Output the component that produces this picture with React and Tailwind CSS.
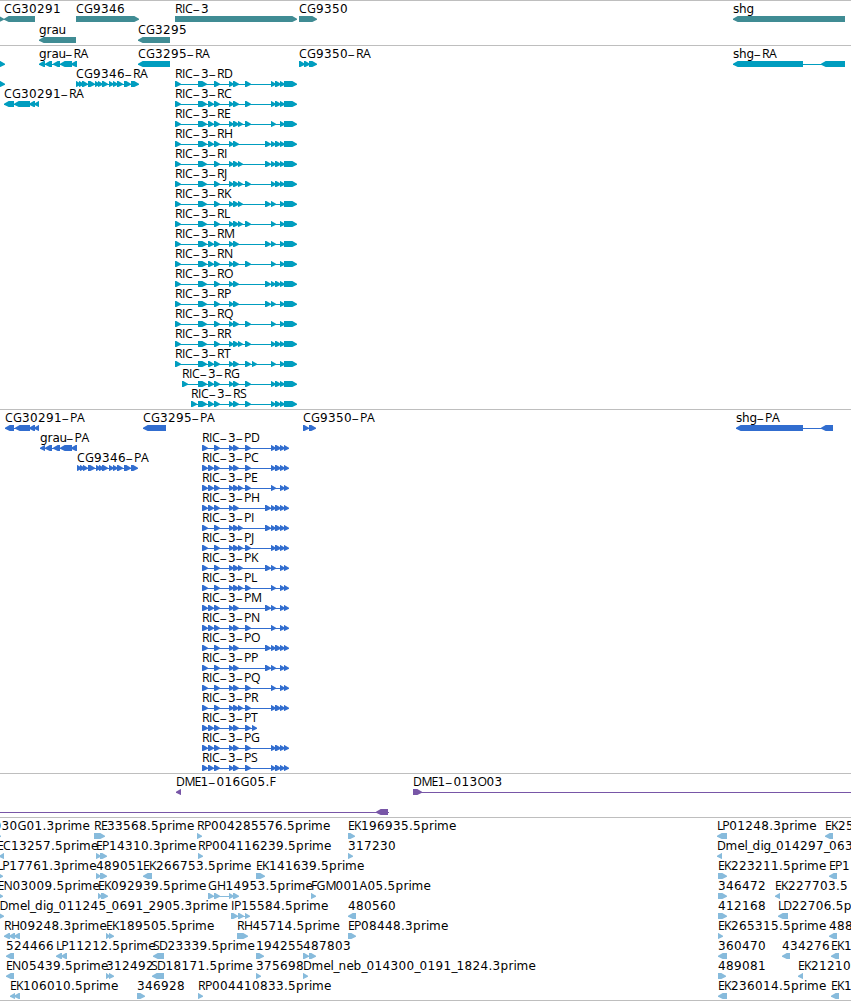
import React from 'react';

// Advance widths, in pixels, of the label characters.
const ADVANCES = {
  A: 8, C: 8, D: 8.5, E: 6, F: 5.5, G: 9, H: 8.5, I: 3, J: 3.5, K: 7, L: 5.3, M: 10, N: 9, O: 9,
  P: 7, Q: 9, R: 7, S: 6, T: 7, a: 7, b: 8, d: 8, e: 7, g: 7.5, h: 7.5, i: 3, l: 3, m: 12,
  n: 8, p: 8, r: 5, s: 6, u: 7, '-': 8, '.': 4, _: 5,
};

function charPositions(text, x) {
  let at = x;
  return [...text].map((c) => {
    const here = at;
    at += ADVANCES[c] ?? 8;
    return here;
  });
}

// One exon: a block that tapers to a tip in the direction of its strand.
function exonPoints(s, e, dir) {
  const t = Math.min(5, e - s);
  return dir > 0
    ? `${s},13 ${e - t + 0.3},13 ${e},15.7 ${e},16.7 ${e - t + 0.3},19 ${s},19`
    : `${e},13 ${s + t - 0.3},13 ${s},15.7 ${s},16.7 ${s + t - 0.3},19 ${e},19`;
}

// f(label, x, direction, exons, [line start, line end])
const f = (label, x, dir, exons, line) => ({ label, x, dir, exons, line });

// Capitals are set in the narrower Open Sans, hyphens large and thin.
function Label({ text, x }) {
  const xs = charPositions(text, x);
  let at = 0;
  return (
    <text y="10" className="fill-black">
      {text
        .split(/(-|[A-Z]+)/)
        .filter(Boolean)
        .map((part) => {
          const start = at;
          at += part.length;
          if (part === '-') {
            return (
              <tspan key={start} x={xs[start] - 0.7} y="12.5" className="text-[22px] font-extralight">
                {part}
              </tspan>
            );
          }
          return (
            <tspan
              key={start}
              x={xs.slice(start, at).join(' ')}
              y="10"
              className={/[A-Z]/.test(part) ? "font-['Open_Sans',sans-serif] text-[12.3px]" : ''}
            >
              {part}
            </tspan>
          );
        })}
    </text>
  );
}

function Feature({ label, x, dir, exons, line }) {
  const from = line ? line[0] : exons[0][0];
  const to = line ? line[1] : exons[exons.length - 1][1];
  return (
    <g>
      <rect x={from} y="16" width={to - from - (line ? 0 : 1)} height="1" shapeRendering="crispEdges" />
      {exons.map(([s, e], i) => (
        <polygon key={i} points={exonPoints(s, e, dir)} />
      ))}
      {label && <Label text={label} x={x} />}
    </g>
  );
}

function Track({ rows, color, rowHeight = 'h-5', pad = 'pb-px' }) {
  return (
    <section className={`border-t border-[#bebebe] pt-0.5 ${pad} ${color}`}>
      {rows.map((row, i) => (
        <svg
          key={i}
          className={`block w-full overflow-visible fill-current font-['DejaVu_Sans',sans-serif] text-[12px] ${rowHeight}`}
        >
          {row.map((feature, j) => (
            <Feature key={j} {...feature} />
          ))}
        </svg>
      ))}
    </section>
  );
}

const SMALL = {
  198: 206, 202: 208, 208: 214, 214: 220, 229: 234, 233: 239, 238: 243,
  245: 251, 252: 257, 265: 271, 271: 276, 275: 281, 280: 285,
};
const toExons = (starts) => starts.map((s) => [s, SMALL[s]]);

const ISOFORMS = [
  ['D', [214, 229, 233, 245, 271, 275, 280]],
  ['C', [208, 214, 229, 233, 245, 271, 275, 280]],
  ['E', [208, 214, 229, 233, 238, 245, 271, 280]],
  ['H', [208, 214, 229, 233, 265, 271, 275, 280]],
  ['I', [214, 229, 233, 238, 265, 271, 275, 280]],
  ['J', [214, 229, 233, 238, 245, 271, 275, 280]],
  ['K', [214, 229, 233, 238, 265, 271, 280]],
  ['L', [214, 229, 233, 238, 245, 271, 280]],
  ['M', [208, 214, 229, 233, 265, 271, 280]],
  ['N', [208, 214, 229, 233, 245, 271, 280]],
  ['O', [214, 229, 233, 265, 271, 275, 280]],
  ['P', [214, 229, 233, 265, 271, 280]],
  ['Q', [214, 229, 233, 245, 271, 280]],
  ['R', [214, 229, 233, 238, 245, 271, 275, 280]],
  ['T', [208, 214, 229, 233, 245, 252, 271, 280]],
  ['G', [208, 214, 229, 233, 245, 271, 275, 280], 182],
  ['S', [208, 214, 229, 233, 245, 271, 275, 280], 191],
];

const ricTranscripts = ISOFORMS.map(([id, starts, first = 175]) =>
  f(`RIC-3-R${id}`, first, 1, [[first, first + 6], [198, 207], ...toExons(starts), [284, 297]]),
);

const ricProteins = ISOFORMS.map(([id, starts]) =>
  id === 'T'
    ? f('RIC-3-PT', 202, 1, toExons([202, 208, 214, 229, 233, 245, 252]))
    : f(`RIC-3-P${id}`, 202, 1, [[202, 208], ...toExons(starts), [284, 289]]),
);

const genes = [
  [
    f('', 0, 1, [[-4, 4]]),
    f('CG30291', 4, -1, [[4, 35]]),
    f('CG9346', 76, 1, [[76, 139]]),
    f('RIC-3', 175, 1, [[175, 297]]),
    f('CG9350', 299, 1, [[299, 317]]),
    f('shg', 733, -1, [[733, 845]]),
  ],
  [f('grau', 39, -1, [[39, 76]]), f('CG3295', 138, -1, [[138, 170]])],
];

const transcripts = [
  [
    f('', 0, 1, [[-1, 5]]),
    f('grau-RA', 39, -1, [[39, 45], [45, 52], [53, 60], [60, 72], [71, 77]]),
    f('CG3295-RA', 138, -1, [[138, 170]]),
    f('CG9350-RA', 299, 1, [[299, 305], [304, 310], [309, 317]]),
    f('shg-RA', 733, -1, [[733, 803], [821, 845]]),
  ],
  [
    f('', 0, 1, [[-1, 5]]),
    f('CG9346-RA', 76, 1, [
      [76, 81], [79, 84], [82, 88], [88, 95], [95, 100], [98, 103],
      [102, 108], [109, 114], [113, 118], [117, 123], [124, 131], [131, 139],
    ]),
    ricTranscripts[0],
  ],
  [f('CG30291-RA', 4, -1, [[4, 14], [14, 30], [29, 35], [34, 39]]), ricTranscripts[1]],
  ...ricTranscripts.slice(2).map((t) => [t]),
];

const proteins = [
  [
    f('CG30291-PA', 5, -1, [[5, 14], [15, 30], [29, 35], [34, 39]]),
    f('CG3295-PA', 143, -1, [[143, 166]]),
    f('CG9350-PA', 303, 1, [[303, 309], [309, 316]]),
    f('shg-PA', 736, -1, [[736, 803], [821, 833]]),
  ],
  [f('grau-PA', 40, -1, [[40, 45], [45, 52], [53, 60], [60, 72], [71, 77]]), ricProteins[0]],
  [
    f('CG9346-PA', 77, 1, [
      [77, 82], [80, 85], [83, 88], [88, 95], [96, 101], [99, 104],
      [102, 108], [109, 114], [113, 118], [117, 123], [124, 131], [131, 138],
    ]),
    ricProteins[1],
  ],
  ...ricProteins.slice(2).map((t) => [t]),
];

const clones = [
  [f('DME1-016G05.F', 176, -1, [[176, 181]]), f('DME1-013O03', 413, 1, [[413, 422]], [413, 851])],
  [f('', 0, -1, [[376, 388]], [0, 389])],
];

const ests = [
  [
    f('030G01.3prime', -6.5, 1, [[-4, 1]]),
    f('RE33568.5prime', 94, 1, [[94, 105]]),
    f('RP004285576.5prime', 197, 1, [[197, 202]]),
    f('EK196935.5prime', 348, 1, [[348, 355]]),
    f('LP01248.3prime', 717, -1, [[717, 727]]),
    f('EK25', 825, -1, [[825, 833]]),
  ],
  [
    f('EC13257.5prime', -3, -1, [[-1, 4]]),
    f('EP14310.3prime', 96, 1, [[96, 101], [100, 107]]),
    f('RP004116239.5prime', 198, 1, [[198, 203]]),
    f('317230', 348, 1, [[348, 353]]),
    f('Dmel_dig_014297_063', 717, -1, [[717, 722]]),
  ],
  [
    f('LP17761.3prime', -3, 1, [[-2, 3]]),
    f('489051', 96, 1, [[96, 101], [100, 107]]),
    f('EK266753.5prime', 143, -1, [[143, 152]]),
    f('EK141639.5prime', 256, 1, [[256, 265]]),
    f('EK223211.5prime', 718, 1, [[718, 727]]),
    f('EP1', 829, -1, [[829, 837]]),
  ],
  [
    f('EN03009.5prime', -2.5, 1, [[-2, 3]]),
    f('EK092939.5prime', 98, 1, [[98, 102], [101, 108]]),
    f('GH14953.5prime', 208, 1, [[208, 214], [214, 220], [229, 234], [233, 239]]),
    f('FGM001A05.5prime', 311, 1, [[311, 316]]),
    f('346472', 718, 1, [[718, 727]]),
    f('EK227703.5', 775, -1, [[775, 780]]),
  ],
  [
    f('Dmel_dig_011245_0691_2905.3prime', -0.5, 1, [[-1, 4]]),
    f('IP15584.5prime', 231, 1, [[231, 238], [238, 244], [245, 250]]),
    f('480560', 348, -1, [[348, 356]]),
    f('412168', 718, 1, [[718, 727]]),
    f('LD22706.5p', 778, -1, [[778, 788]]),
  ],
  [
    f('RH09248.3prime', 4, -1, [[4, 10], [9, 15], [14, 20]]),
    f('EK189505.5prime', 106, 1, [[106, 110], [109, 114]]),
    f('RH45714.5prime', 237, 1, [[237, 248]]),
    f('EP08448.3prime', 348, 1, [[348, 356]]),
    f('EK265315.5prime', 718, 1, [[718, 723]]),
    f('488', 829, -1, [[829, 837]]),
  ],
  [
    f('524466', 6, -1, [[6, 14]]),
    f('LP11212.5prime', 56, -1, [[56, 62], [61, 67]]),
    f('SD23339.5prime', 153, -1, [[153, 164]]),
    f('194255', 256, 1, [[256, 264]]),
    f('487803', 303, 1, [[303, 309], [309, 316]]),
    f('360470', 718, -1, [[718, 727]]),
    f('434276', 782, -1, [[782, 790]]),
    f('EK1', 831, -1, [[831, 839]]),
  ],
  [
    f('EN05439.5prime', 6, -1, [[6, 14]]),
    f('312492', 106, 1, [[106, 110], [109, 114]]),
    f('SD18171.5prime', 151, -1, [[152, 164]]),
    f('375698', 256, 1, [[256, 261]]),
    f('Dmel_neb_014300_0191_1824.3prime', 303, 1, [[303, 308]]),
    f('489081', 718, 1, [[718, 726]]),
    f('EK21210', 798, -1, [[798, 803]]),
  ],
  [
    f('EK106010.5prime', 10, -1, [[10, 15], [14, 20]]),
    f('346928', 137, 1, [[137, 145]]),
    f('RP004410833.5prime', 198, 1, [[198, 203]]),
    f('EK236014.5prime', 718, -1, [[718, 727]]),
    f('EK1', 831, -1, [[831, 839]]),
  ],
];

export default function App() {
  return (
    <main className="w-[851px] h-[1001px] overflow-hidden bg-white border-b border-[#bebebe]">
      <Track rows={genes} color="text-[#408c94]" rowHeight="h-[21px]" pad="pb-0" />
      <Track rows={transcripts} color="text-[#009dbf]" />
      <Track rows={proteins} color="text-[#316dcf]" />
      <Track rows={clones} color="text-[#7856a7]" />
      <Track rows={ests} color="text-[#87bbdc]" pad="pb-0" />
    </main>
  );
}
